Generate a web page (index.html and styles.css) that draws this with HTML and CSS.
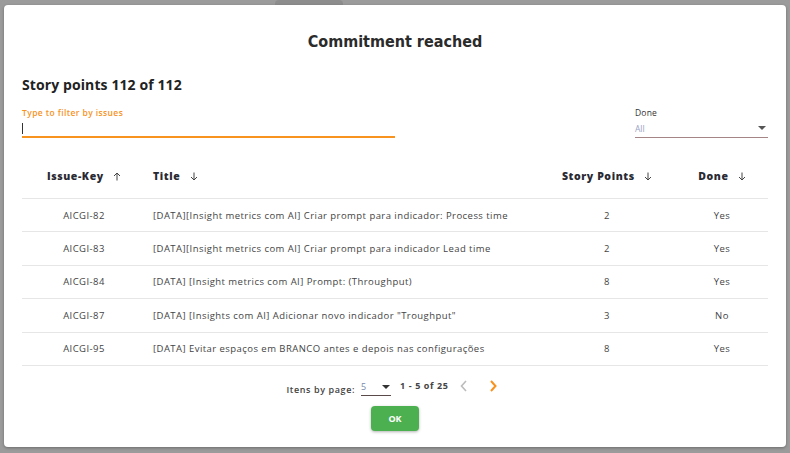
FILE: index.html
```html
<!DOCTYPE html>
<html lang="en">
<head>
    <meta charset="UTF-8">
    <title>Commitment reached</title>
    <link rel="stylesheet" href="styles.css">
</head>
<body>
    <div class="backdrop-tab"></div>
    <div class="dialog">
        <h1 class="dialog-title">Commitment reached</h1>
        <h2 class="points-title">Story points 112 of 112</h2>

        <div class="filters">
            <label class="field field-text">
                <span class="field-label">Type to filter by issues</span>
                <span class="field-input"><span class="caret"></span></span>
            </label>
            <div class="field field-select">
                <span class="field-label dark">Done</span>
                <span class="field-input select-input">
                    <span class="select-value">All</span>
                    <span class="select-arrow"></span>
                </span>
            </div>
        </div>

        <table class="issues">
            <thead>
                <tr>
                    <th class="col-key">Issue-Key <svg class="sort" width="8" height="9" viewBox="0 0 8 9"><path d="M4 8.5 V1 M1 4 L4 1 L7 4" fill="none" stroke="currentColor" stroke-width="1"/></svg></th>
                    <th class="col-title">Title <svg class="sort" width="8" height="9" viewBox="0 0 8 9"><path d="M4 0.5 V8 M1 5 L4 8 L7 5" fill="none" stroke="currentColor" stroke-width="1"/></svg></th>
                    <th class="col-points">Story Points <svg class="sort" width="8" height="9" viewBox="0 0 8 9"><path d="M4 0.5 V8 M1 5 L4 8 L7 5" fill="none" stroke="currentColor" stroke-width="1"/></svg></th>
                    <th class="col-done">Done <svg class="sort" width="8" height="9" viewBox="0 0 8 9"><path d="M4 0.5 V8 M1 5 L4 8 L7 5" fill="none" stroke="currentColor" stroke-width="1"/></svg></th>
                </tr>
            </thead>
            <tbody>
                <tr>
                    <td class="col-key">AICGI-82</td>
                    <td class="col-title">[DATA][Insight metrics com AI] Criar prompt para indicador: Process time</td>
                    <td class="col-points">2</td>
                    <td class="col-done">Yes</td>
                </tr>
                <tr>
                    <td class="col-key">AICGI-83</td>
                    <td class="col-title">[DATA][Insight metrics com AI] Criar prompt para indicador Lead time</td>
                    <td class="col-points">2</td>
                    <td class="col-done">Yes</td>
                </tr>
                <tr>
                    <td class="col-key">AICGI-84</td>
                    <td class="col-title">[DATA] [Insight metrics com AI] Prompt: (Throughput)</td>
                    <td class="col-points">8</td>
                    <td class="col-done">Yes</td>
                </tr>
                <tr>
                    <td class="col-key">AICGI-87</td>
                    <td class="col-title">[DATA] [Insights com AI] Adicionar novo indicador "Troughput"</td>
                    <td class="col-points">3</td>
                    <td class="col-done">No</td>
                </tr>
                <tr>
                    <td class="col-key">AICGI-95</td>
                    <td class="col-title">[DATA] Evitar espaços em BRANCO antes e depois nas configurações</td>
                    <td class="col-points">8</td>
                    <td class="col-done">Yes</td>
                </tr>
            </tbody>
        </table>

        <div class="paginator">
            <span class="page-label">Itens by page:</span>
            <span class="page-size">
                <span class="page-size-value">5</span>
                <span class="select-arrow"></span>
            </span>
            <span class="page-range">1 - 5 of 25</span>
            <span class="page-btn disabled">
                <svg width="10" height="12" viewBox="0 0 10 12"><path d="M7 1 L2.5 6 L7 11" fill="none" stroke="currentColor" stroke-width="1.6"/></svg>
            </span>
            <span class="page-btn next">
                <svg width="10" height="12" viewBox="0 0 10 12"><path d="M3 1 L7.5 6 L3 11" fill="none" stroke="currentColor" stroke-width="2"/></svg>
            </span>
        </div>

        <div class="actions">
            <button class="ok-btn">OK</button>
        </div>
    </div>
</body>
</html>
```

FILE: styles.css
```css
html, body {
    margin: 0;
    height: 453px;
    overflow: hidden;
}
body {
    background-color: #9b9b9b;
    font-family: 'Open Sans', sans-serif;
    color: #333;
    padding: 5px 4px 0 4px;
    box-sizing: border-box;
    position: relative;
}
.backdrop-tab {
    position: absolute;
    left: 275px;
    top: 0;
    width: 68px;
    height: 8px;
    border-radius: 4px;
    background: #8d8d8d;
}
.dialog {
    position: relative;
    height: 442px;
    background: #fff;
    border-radius: 4px;
    padding: 0 18px;
    box-sizing: border-box;
    box-shadow: 0 1px 3px rgba(0,0,0,0.3);
}
.dialog-title {
    margin: 0;
    padding-top: 27px;
    text-align: center;
    font-family: 'DejaVu Sans Condensed', 'DejaVu Sans', sans-serif;
    font-size: 16px;
    line-height: 20px;
    font-weight: bold;
    color: #2b2b2b;
}
.points-title {
    margin: 24px 0 0 0;
    font-size: 14px;
    line-height: 18px;
    font-weight: 700;
    letter-spacing: 0.1px;
    color: #222;
}
.filters {
    display: flex;
    justify-content: space-between;
    margin-top: 13px;
}
.field {
    display: flex;
    flex-direction: column;
}
.field-text {
    width: 373px;
}
.field-select {
    width: 133px;
}
.field-label {
    font-size: 8.5px;
    line-height: 12px;
    font-weight: 600;
    letter-spacing: 0.4px;
    color: #f7931e;
}
.field-label.dark {
    color: #333;
    font-weight: 500;
    letter-spacing: 0.2px;
}
.field-input {
    height: 17px;
    display: flex;
    align-items: center;
}
.field-text .field-input {
    border-bottom: 2px solid #f7931e;
}
.caret {
    width: 1px;
    height: 11px;
    background: #333;
    margin-top: 2px;
}
.select-input {
    justify-content: space-between;
    border-bottom: 1px solid #a58585;
    height: 18px;
}
.select-value {
    font-size: 8.5px;
    color: #9aa3c0;
    margin-top: 1px;
}
.select-arrow {
    width: 0;
    height: 0;
    border-left: 4px solid transparent;
    border-right: 4px solid transparent;
    border-top: 4px solid #555;
    margin-right: 2px;
}
.issues {
    width: 100%;
    border-collapse: collapse;
    margin-top: 16px;
    font-size: 9.5px;
}
.issues th {
    height: 44px;
    font-size: 10.5px;
    font-weight: 800;
    letter-spacing: 0.6px;
    color: #2a2a33;
    border-bottom: 1px solid #e6e6e6;
    padding: 0;
    white-space: nowrap;
}
.issues td {
    height: 32.4px;
    color: #444;
    border-bottom: 1px solid #e6e6e6;
    padding: 0;
    letter-spacing: 0.45px;
}
.sort {
    margin-left: 6px;
    color: #444;
    vertical-align: -1px;
}
.col-key {
    width: 124px;
    text-align: center;
}
.col-title {
    text-align: left;
    padding-left: 7px !important;
}
.col-points {
    width: 138px;
    text-align: center;
}
.col-done {
    width: 92px;
    text-align: center;
}
.paginator {
    display: flex;
    justify-content: center;
    align-items: flex-start;
    margin-top: 13px;
    padding-right: 6px;
    font-size: 9px;
    color: #444;
    letter-spacing: 0.6px;
}
.page-label {
    font-weight: 600;
    margin-top: 4px;
}
.page-size {
    display: flex;
    align-items: center;
    justify-content: space-between;
    width: 30px;
    margin-left: 6px;
    border-bottom: 1px solid #5a4a4a;
    height: 16px;
}
.page-size-value {
    color: #7a8aaa;
    font-size: 9px;
}
.page-size .select-arrow {
    margin-right: 1px;
    border-top-color: #333;
}
.page-range {
    margin-left: 9px;
    font-weight: 700;
}
.page-btn {
    display: flex;
    align-items: center;
    height: 12px;
    margin-left: 10px;
    color: #bcbcbc;
    padding-top: 1px;
}
.page-btn.next {
    margin-left: 19px;
    color: #f7931e;
}
.actions {
    display: flex;
    justify-content: center;
    margin-top: 10px;
}
.ok-btn {
    width: 48px;
    height: 25px;
    border: none;
    border-radius: 4px;
    background: #4caf50;
    color: #fff;
    font-family: 'Open Sans', sans-serif;
    font-size: 9px;
    font-weight: 700;
    box-shadow: 0 1px 3px rgba(0,0,0,0.3);
    cursor: pointer;
}
```
